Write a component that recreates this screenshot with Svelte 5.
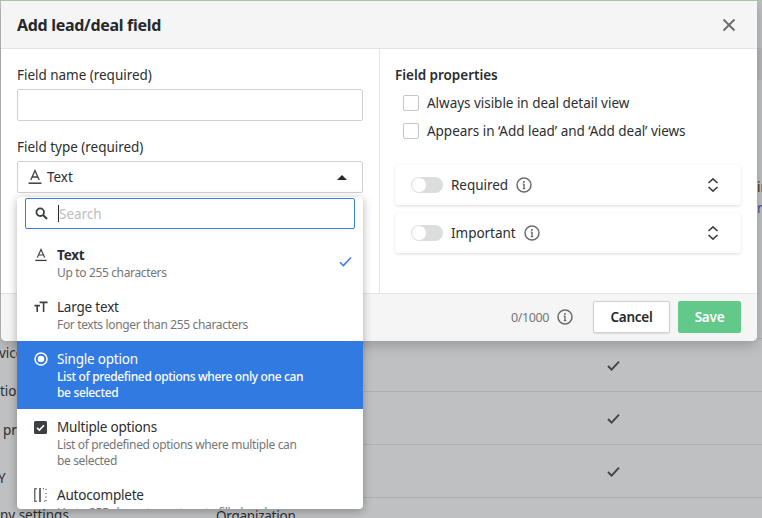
<script>
  const options = [
    { id: 'text', title: 'Text', sub: 'Up to 255 characters', selected: true },
    { id: 'large', title: 'Large text', sub: 'For texts longer than 255 characters' },
    { id: 'single', title: 'Single option', sub: 'List of predefined options where only one can be selected', active: true },
    { id: 'multi', title: 'Multiple options', sub: 'List of predefined options where multiple can be selected' },
    { id: 'auto', title: 'Autocomplete', sub: 'Up to 255 characters + type to fill-ahead' }
  ];
  const toggles = ['Required', 'Important'];
  const checks = ['Always visible in deal detail view', 'Appears in ‘Add lead’ and ‘Add deal’ views'];
</script>

{#snippet info(cls)}
  <svg class={cls} width="16" height="16" viewBox="0 0 16 16" fill="none">
    <circle cx="8" cy="8" r="7" stroke="currentColor" stroke-width="1.5" />
    <circle cx="8" cy="4.9" r="1" fill="currentColor" />
    <path d="M8 7v4.6M6.8 7.2H8M6.8 11.6h2.4" stroke="currentColor" stroke-width="1.4" />
  </svg>
{/snippet}

{#snippet letterA(size)}
  <svg width={size} height={size} viewBox="0 0 16 16" fill="none" stroke="currentColor" stroke-width="1.3">
    <path d="M3.8 11 8 1.6 12.2 11M5.2 8h5.6" />
    <path d="M1.5 14.2h13" stroke-width="1.5" />
  </svg>
{/snippet}

<div class="page">
  <div class="bg-rows">
    <div class="band"></div>
    <div class="frag-ir">in</div>
    <div class="frag-blue">re</div>
    <div class="spacer"></div>
    <div class="row"></div>
    {#each [0, 1, 2] as r (r)}
      <div class="row">
        <svg width="13" height="11" viewBox="0 0 13 11" fill="none"><path d="M1 6l3.6 3.6L12 1.6" stroke="#45474a" stroke-width="2" /></svg>
      </div>
    {/each}
    <div class="row last">Organization</div>
  </div>

  <div class="bg-left">
    <div class="l1">vice</div>
    <div class="l2">tion</div>
    <div class="l3">pr</div>
    <div class="l4">Y</div>
    <div class="l5">ny settings</div>
  </div>

  <div class="modal">
    <header>
      <h1>Add lead/deal field</h1>
      <svg width="14" height="14" viewBox="0 0 14 14" fill="none"><path d="M1.5 1.5l11 11M12.5 1.5l-11 11" stroke="#6a6d70" stroke-width="1.9" /></svg>
    </header>

    <div class="body">
      <section class="left">
        <div class="label">Field name (required)</div>
        <div class="input"></div>
        <div class="label second">Field type (required)</div>
        <div class="select-wrap">
          <div class="input select">
            <span class="a-icon">{@render letterA(16)}</span>
            <span>Text</span>
            <span class="caret"></span>
          </div>
          <div class="dropdown">
            <div class="search">
              <svg width="13" height="13" viewBox="0 0 13 13" fill="none" stroke="#3c3f42" stroke-width="1.8"><circle cx="5.2" cy="5.2" r="3.8" /><path d="M8 8l4 4" stroke-width="2.2" /></svg>
              <span class="cursor"></span>
              <span class="ph">Search</span>
            </div>
            {#each options as o (o.id)}
              <div class="opt" class:active={o.active}>
                <div class="opt-icon">
                  {#if o.id === 'text'}
                    {@render letterA(14)}
                  {:else if o.id === 'large'}
                    <svg width="14" height="12" viewBox="0 0 14 12" fill="none" stroke="currentColor" stroke-width="1.6"><path d="M0.5 4.6h5.4M3.2 4.6V11M5.6 1.4h8M9.6 1.4V11" /></svg>
                  {:else if o.id === 'single'}
                    <svg width="14" height="14" viewBox="0 0 14 14" fill="none"><circle cx="7" cy="7" r="6" stroke="#fff" stroke-width="1.5" /><circle cx="7" cy="7" r="3.3" fill="#fff" /></svg>
                  {:else if o.id === 'multi'}
                    <svg width="13" height="13" viewBox="0 0 13 13" fill="none"><rect width="13" height="13" rx="1.5" fill="#3c3f42" /><path d="M3 6.8l2.4 2.3L10 4.2" stroke="#fff" stroke-width="1.6" /></svg>
                  {:else}
                    <svg width="13" height="14" viewBox="0 0 13 14" fill="none" stroke="currentColor" stroke-width="1.1"><path d="M3 .8H.8v12.4H3" /><path d="M6 0v14" stroke-width="1.5" /><path d="M9 .8h1M12 .8v2M12 5v1.5M12 8.5V10M12 12v1.2h-2" stroke-dasharray="1 1" /></svg>
                  {/if}
                </div>
                <div class="opt-text">
                  <div class="opt-title" class:bold={o.selected}>{o.title}</div>
                  <div class="opt-sub">{o.sub}</div>
                </div>
                {#if o.selected}
                  <svg class="tick" width="13" height="11" viewBox="0 0 13 11" fill="none"><path d="M1 6.2l3.4 3.4L12 1.4" stroke="#3a7de0" stroke-width="1.5" /></svg>
                {/if}
              </div>
            {/each}
          </div>
        </div>
      </section>

      <section class="right">
        <div class="label strong">Field properties</div>
        <div class="checks">
          {#each checks as c (c)}
            <div class="check"><span class="box"></span><span>{c}</span></div>
          {/each}
        </div>
        <div class="cards">
          {#each toggles as t (t)}
            <div class="card">
              <span class="toggle"><span class="knob"></span></span>
              <span class="card-label">{t}</span>
              {@render info('card-info')}
              <svg class="updown" width="12" height="16" viewBox="0 0 12 16" fill="none" stroke="#3c3f42" stroke-width="1.6"><path d="M1.5 6 6 1.8 10.5 6M1.5 10 6 14.2 10.5 10" /></svg>
            </div>
          {/each}
        </div>
      </section>
    </div>

    <footer>
      <span class="count">0/1000</span>
      {@render info('foot-info')}
      <button class="cancel">Cancel</button>
      <button class="save">Save</button>
    </footer>
  </div>
</div>

<style>
  :global(body) { margin: 0; }
  .page {
    position: relative;
    width: 762px;
    height: 518px;
    overflow: hidden;
    background: #bfc0c2;
    border-top: 1px solid #a9c4a4;
    box-sizing: border-box;
    font-family: "Noto Sans", "Open Sans", sans-serif;
    font-size: 13.5px;
    color: #2b2e31;
    letter-spacing: -0.03px;
  }
  .bg-rows { display: flex; flex-direction: column; }
  .band { margin-top: 47px; height: 32px; background: #b6b7b9; }
  .frag-ir, .frag-blue { padding-left: 757px; line-height: 18px; white-space: nowrap; }
  .frag-ir { margin-top: 98px; }
  .frag-blue { margin-top: 3px; color: #2a62b4; }
  .spacer { height: 69px; }
  .row {
    height: 53px;
    box-sizing: border-box;
    margin-left: 40px;
    border-bottom: 1px solid #adaeb0;
    display: flex;
    align-items: center;
    padding-left: 567px;
  }
  .row.last { border: 0; padding-left: 176px; align-items: flex-start; padding-top: 9px; letter-spacing: -0.25px; }

  .bg-left { position: absolute; left: 0; top: 0; width: 20px; height: 100%; }
  .bg-left div { position: absolute; white-space: nowrap; line-height: 18px; }
  .l1 { top: 343px; left: -1px; }
  .l2 { top: 381px; left: 0; }
  .l3 { top: 420px; left: 3px; }
  .l4 { top: 468px; left: -2px; }
  .l5 { top: 505px; left: 0; }

  .modal {
    position: absolute;
    left: 1px;
    top: 0;
    width: 756px;
    height: 340px;
    background: #fff;
    border-radius: 0 0 5px 5px;
    box-shadow: 0 4px 14px rgba(0, 0, 0, 0.22);
    display: flex;
    flex-direction: column;
  }
  header {
    height: 48px;
    box-sizing: border-box;
    background: #f5f5f5;
    border-bottom: 1px solid #e3e4e4;
    display: flex;
    align-items: center;
    justify-content: space-between;
    padding: 0 21px 0 16px;
  }
  h1 { margin: 0; font-size: 16px; font-weight: 700; letter-spacing: -0.3px; color: #26292c; }
  .body { flex: 1; display: flex; min-height: 0; }
  .left { width: 379px; box-sizing: border-box; padding: 17px 16px 0; border-right: 1px solid #e3e4e4; }
  .right { flex: 1; padding: 17px 16px 0 15px; }
  .label { line-height: 18px; }
  .strong { font-weight: 600; }
  .second { margin-top: 17px; }
  .input {
    height: 32px;
    box-sizing: border-box;
    margin-top: 5px;
    background: #fff;
    border: 1px solid #cfd0d1;
    border-radius: 2px;
  }
  .select-wrap { position: relative; }
  .select { display: flex; align-items: center; padding-left: 9px; gap: 4px; }
  .a-icon { display: flex; color: #3c3f42; }
  .caret {
    margin-left: auto;
    margin-right: 15px;
    border: 5px solid transparent;
    border-top: 0;
    border-bottom: 5px solid #26292c;
    width: 0;
  }
  .dropdown {
    position: absolute;
    left: 0;
    right: 0;
    top: 36px;
    height: 312px;
    background: #fff;
    border-radius: 4px;
    box-shadow: 0 2px 10px rgba(0, 0, 0, 0.3);
    overflow: hidden;
    z-index: 2;
  }
  .search {
    margin: 1px 8px 8px;
    height: 31px;
    box-sizing: border-box;
    border: 1px solid #3a7de0;
    border-radius: 2px;
    display: flex;
    align-items: center;
    padding-left: 9px;
  }
  .cursor { width: 1px; height: 17px; background: #26292c; margin-left: 10px; }
  .ph { color: #bcbdbf; margin-left: 0; }
  .opt { position: relative; display: flex; padding: 9px 0 8px 17px; }
  .opt-icon { width: 23px; height: 18px; display: flex; align-items: center; color: #3c3f42; }
  .opt-text { width: 250px; }
  .opt-title { line-height: 18px; letter-spacing: -0.2px; }
  .bold { font-weight: 700; }
  .opt-sub { margin-top: 1px; font-size: 12px; line-height: 16px; color: #747678; letter-spacing: -0.35px; }
  .active { background: #317ae2; color: #fff; }
  .active .opt-icon { color: #fff; }
  .active .opt-sub { color: #fff; font-weight: 500; }
  .tick { position: absolute; right: 11px; top: 19px; }

  .checks { padding-left: 8px; margin-top: 8px; display: flex; flex-direction: column; gap: 6px; }
  .check { display: flex; align-items: center; gap: 8px; height: 22px; }
  .box { width: 16px; height: 16px; box-sizing: border-box; border: 1px solid #c4c5c6; border-radius: 2px; background: #fff; }
  .cards { margin-top: 23px; display: flex; flex-direction: column; gap: 8px; }
  .card {
    height: 40px;
    box-sizing: border-box;
    border-radius: 4px;
    background: #fff;
    box-shadow: 0 1px 3px rgba(0, 0, 0, 0.14);
    display: flex;
    align-items: center;
    padding: 0 22px 0 16px;
  }
  .toggle { width: 32px; height: 16px; border-radius: 8px; background: #dcdddd; display: flex; align-items: center; padding-left: 1px; box-sizing: border-box; }
  .knob { width: 14px; height: 14px; border-radius: 50%; background: #fff; }
  .card-label { margin-left: 8px; margin-right: 8px; }
  .card-info, .foot-info { color: #6a6d70; }
  .updown { margin-left: auto; }

  footer {
    height: 48px;
    box-sizing: border-box;
    background: #f5f5f5;
    border-top: 1px solid #e3e4e4;
    border-radius: 0 0 5px 5px;
    display: flex;
    align-items: center;
    justify-content: flex-end;
    padding: 0 16px 1px;
  }
  .count { color: #747678; font-size: 12.5px; letter-spacing: -0.4px; }
  .foot-info { margin-left: 8px; margin-right: 20px; }
  button {
    height: 32px;
    font: inherit;
    font-weight: 600;
    letter-spacing: -0.25px;
    border-radius: 2px;
    padding: 0;
  }
  .cancel { width: 77px; background: #fff; border: 1px solid #cfd0d1; color: #26292c; box-shadow: 0 1px 2px rgba(0,0,0,.1); }
  .save { width: 63px; margin-left: 8px; background: #63c98a; border: 0; color: #fff; }
</style>
